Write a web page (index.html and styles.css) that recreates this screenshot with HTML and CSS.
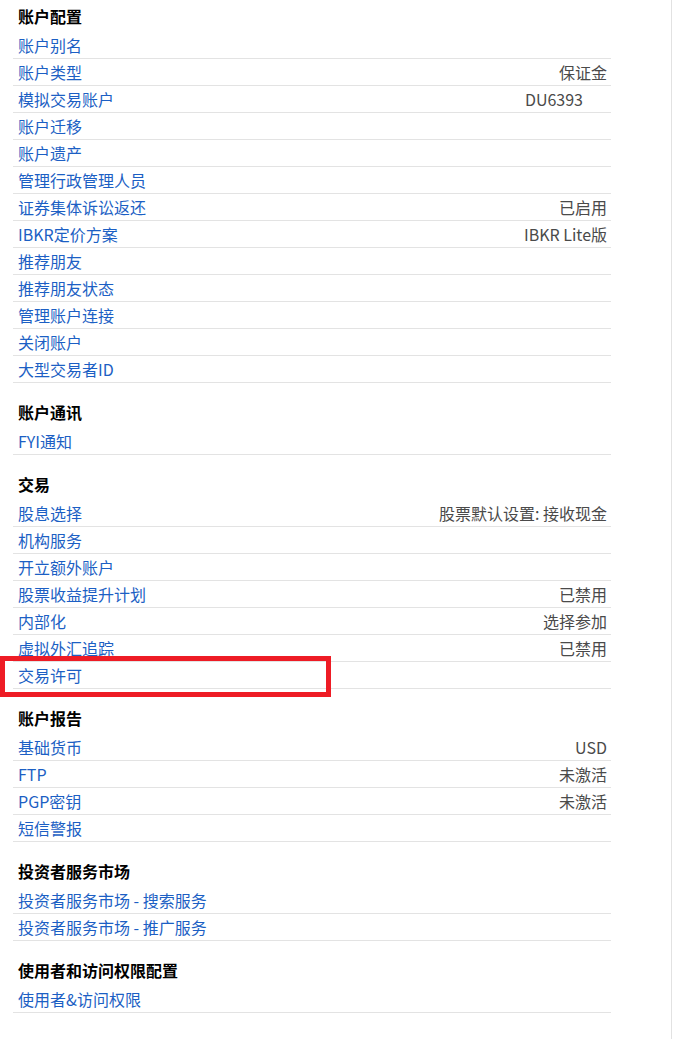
FILE: index.html
```html
<!DOCTYPE html>
<html lang="zh-CN">
<head>
    <meta charset="UTF-8">
    <meta name="viewport" content="width=device-width, initial-scale=1.0">
    <title>设置</title>
    <link rel="stylesheet" href="styles.css">
</head>
<body>
    <div class="panel">
        <div class="section first">
            <h3>账户配置</h3>
            <div class="row"><a href="#">账户别名</a></div>
            <div class="row"><a href="#">账户类型</a><span class="value">保证金</span></div>
            <div class="row"><a href="#">模拟交易账户</a><span class="value masked">DU6393</span></div>
            <div class="row"><a href="#">账户迁移</a></div>
            <div class="row"><a href="#">账户遗产</a></div>
            <div class="row"><a href="#">管理行政管理人员</a></div>
            <div class="row"><a href="#">证券集体诉讼返还</a><span class="value">已启用</span></div>
            <div class="row"><a href="#">IBKR定价方案</a><span class="value">IBKR Lite版</span></div>
            <div class="row"><a href="#">推荐朋友</a></div>
            <div class="row"><a href="#">推荐朋友状态</a></div>
            <div class="row"><a href="#">管理账户连接</a></div>
            <div class="row"><a href="#">关闭账户</a></div>
            <div class="row"><a href="#">大型交易者ID</a></div>
        </div>

        <div class="section">
            <h3>账户通讯</h3>
            <div class="row"><a href="#">FYI通知</a></div>
        </div>

        <div class="section">
            <h3>交易</h3>
            <div class="row"><a href="#">股息选择</a><span class="value">股票默认设置: 接收现金</span></div>
            <div class="row"><a href="#">机构服务</a></div>
            <div class="row"><a href="#">开立额外账户</a></div>
            <div class="row"><a href="#">股票收益提升计划</a><span class="value">已禁用</span></div>
            <div class="row"><a href="#">内部化</a><span class="value">选择参加</span></div>
            <div class="row"><a href="#">虚拟外汇追踪</a><span class="value">已禁用</span></div>
            <div class="row"><a href="#">交易许可</a></div>
        </div>

        <div class="section">
            <h3>账户报告</h3>
            <div class="row"><a href="#">基础货币</a><span class="value">USD</span></div>
            <div class="row"><a href="#">FTP</a><span class="value">未激活</span></div>
            <div class="row"><a href="#">PGP密钥</a><span class="value">未激活</span></div>
            <div class="row"><a href="#">短信警报</a></div>
        </div>

        <div class="section">
            <h3>投资者服务市场</h3>
            <div class="row"><a href="#">投资者服务市场 - 搜索服务</a></div>
            <div class="row"><a href="#">投资者服务市场 - 推广服务</a></div>
        </div>

        <div class="section">
            <h3>使用者和访问权限配置</h3>
            <div class="row"><a href="#">使用者&amp;访问权限</a></div>
        </div>

        <!-- highlight around 交易许可 -->
        <div class="highlight"></div>
    </div>
</body>
</html>
```

FILE: styles.css
```css
html, body { margin: 0; padding: 0; background: #fff; }
body { font-family: "Noto Sans CJK SC", "Noto Sans", sans-serif; font-size: 16px; }
.panel { position: relative; width: 672px; min-height: 1039px; box-sizing: border-box; border-right: 1px solid #e2e2e2; padding: 1px 0 0 13px; }
.section { width: 598px; margin-top: 14px; }
.section.first { margin-top: 0; }
.section h3 { margin: 0; padding-left: 5px; height: 31px; line-height: 31px; font-size: 16px; font-weight: bold; color: #000; }
.row { display: flex; justify-content: space-between; align-items: center; height: 26px; line-height: 26px; border-bottom: 1px solid #e3e3e3; padding: 0 4px 0 5px; }
.row a { color: #1c5fc4; text-decoration: none; }
.row a:hover { text-decoration: underline; }
.value { color: #4a4a4a; }
.value.masked { margin-right: 24px; }
.highlight { position: absolute; left: 0; top: 656px; width: 331px; height: 41px; box-sizing: border-box; border: 5px solid #ee1c25; }
```
